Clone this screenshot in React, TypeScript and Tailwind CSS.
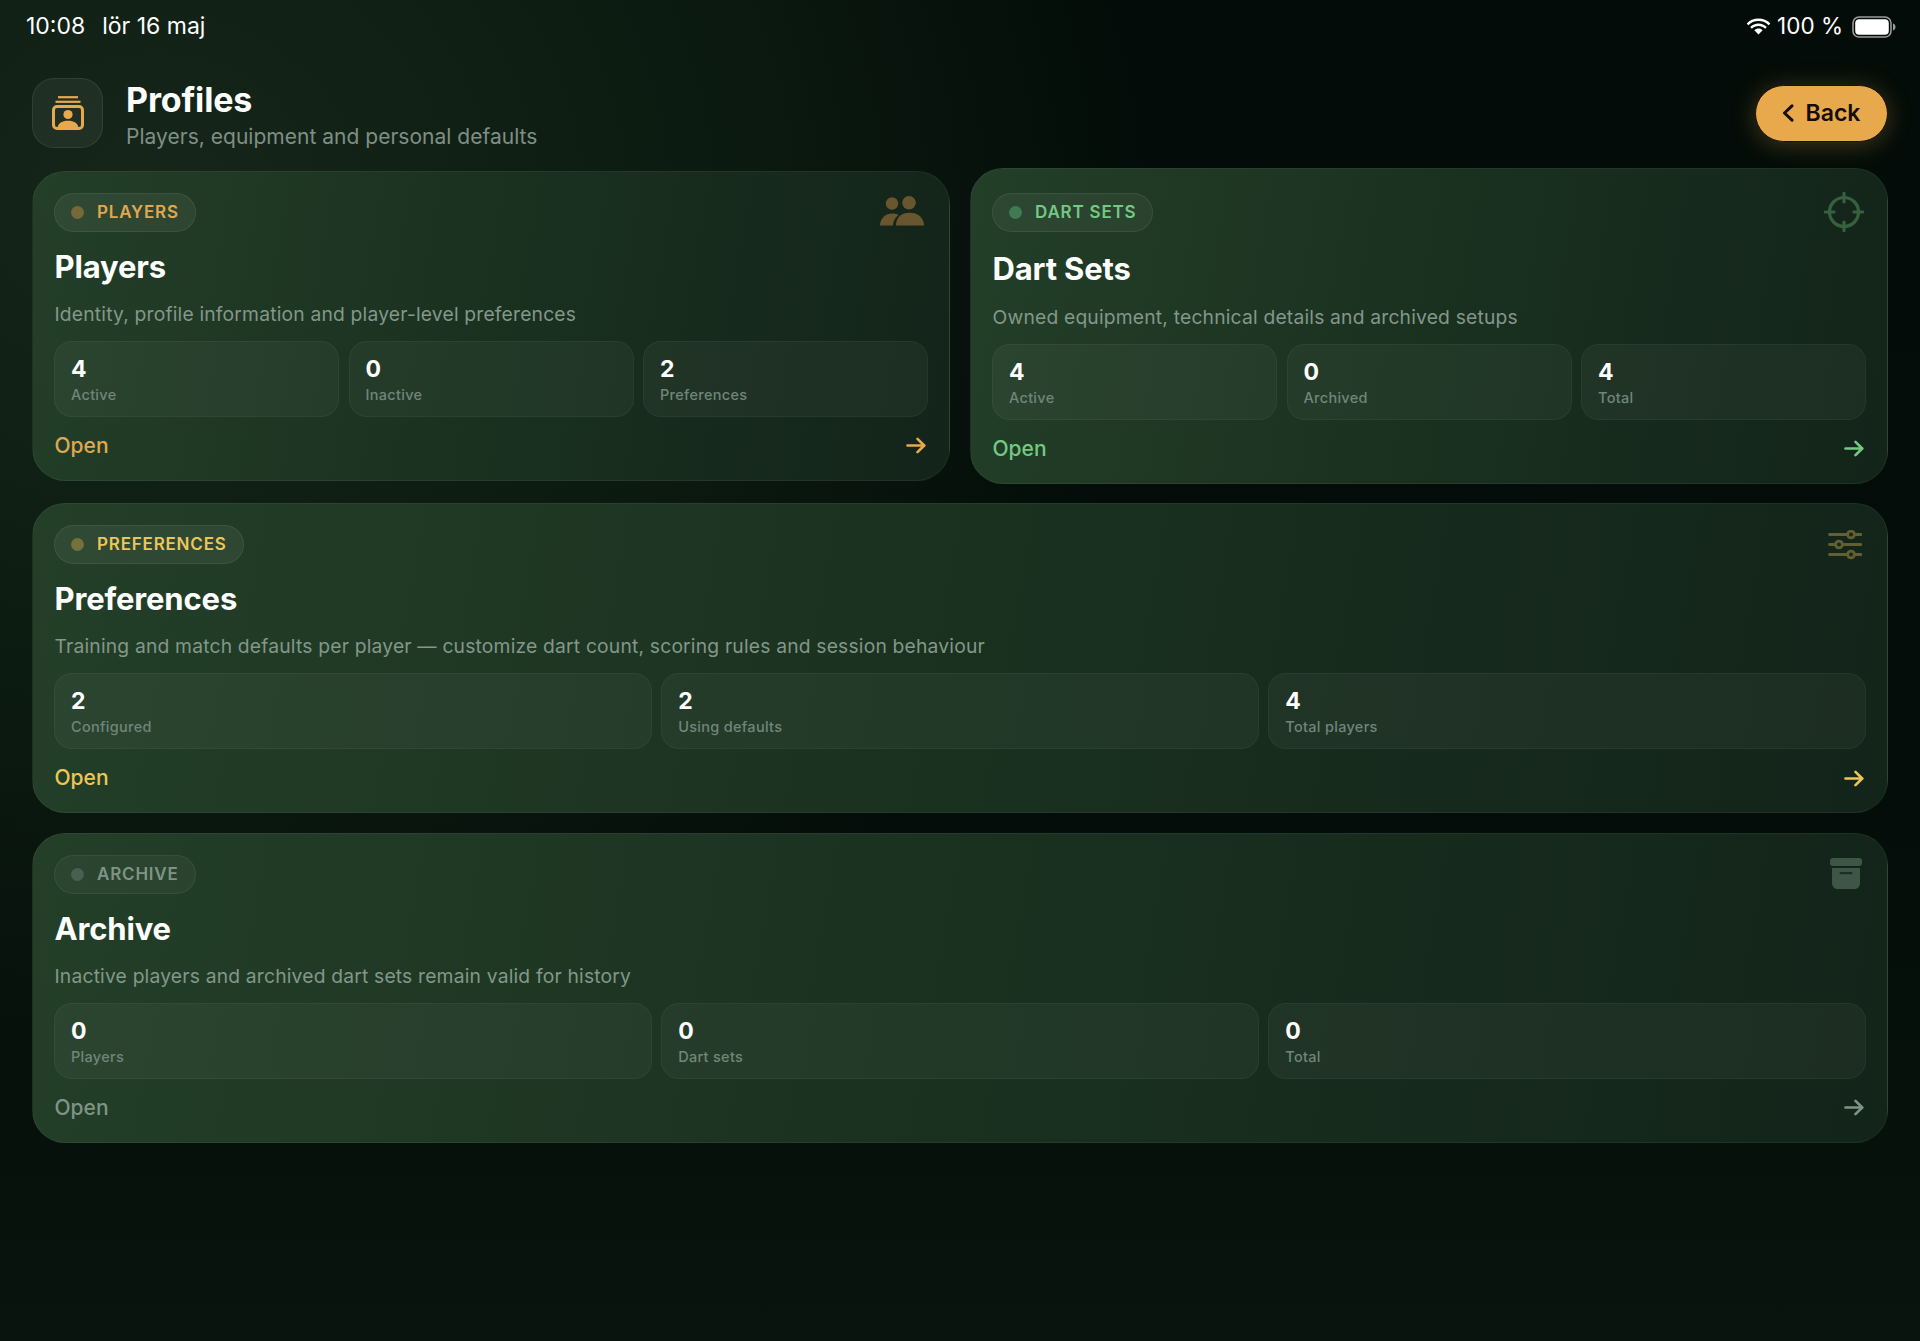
import React from "react";

type Stat = { value: string; label: string };
type CardProps = {
  pill: string;
  title: string;
  desc: string;
  stats: Stat[];
  pillText: string;
  pillBg: string;
  dot: string;
  openText: string;
  icon: React.ReactNode;
  arrow: string;
  lifted?: boolean;
  className?: string;
};

function Card({ pill, title, desc, stats, pillText, pillBg, dot, openText, icon, arrow, lifted, className }: CardProps) {
  return (
    <section
      className={`relative rounded-[33px] border border-[#ffffff0e] bg-[linear-gradient(100deg,#233f28_0%,#1b3220_45%,#13241a_100%)] px-[21px] pb-[20px] ${lifted ? "pt-[24px]" : "pt-[21px]"} ${className ?? ""}`}
    >
      <div className="flex items-start justify-between">
        <div className={`flex h-[39px] items-center gap-[13px] rounded-full border pl-[16px] pr-[16px] ${pillBg}`}>
          <span className={`h-[13px] w-[13px] rounded-full ${dot}`} />
          <span className={`text-[17px] font-semibold leading-none tracking-[0.8px] ${pillText}`}>{pill}</span>
        </div>
        {icon}
      </div>
      <h2 className={`${lifted ? "mt-[18px]" : "mt-[16px]"} pl-[0.5px] text-[31px] font-bold leading-[37px] tracking-[-0.15px] text-white`}>{title}</h2>
      <p className={`${lifted ? "mt-[16.5px]" : "mt-[16px]"} pl-[0.5px] text-[19.3px] leading-[26px] tracking-[0.18px] text-[#83978a]`}>{desc}</p>
      <div className="mt-[14px] grid grid-cols-3 gap-[9.5px]">
        {stats.map((s) => (
          <div key={s.label} className="h-[76px] rounded-[18px] border border-[#ffffff0b] bg-[#ffffff0a] px-[16px] pt-[13px]">
            <div className="text-[23px] font-bold leading-[28px] text-white">{s.value}</div>
            <div className="mt-[3px] text-[14.5px] font-medium leading-[18px] tracking-[0.3px] text-[#71867a]">{s.label}</div>
          </div>
        ))}
      </div>
      <div className="mt-[15px] flex h-[28px] items-center justify-between">
        <span className={`pl-[0.5px] text-[21px] font-medium leading-[28px] ${openText}`}>Open</span>
        <svg width="20" height="17" viewBox="0 0 20 17" fill="none" stroke={arrow} strokeWidth="2.6" strokeLinecap="round" strokeLinejoin="round" className="mr-[2px]">
          <path d="M1.5 8.5H18" />
          <path d="M11.5 1.8L18.2 8.5L11.5 15.2" />
        </svg>
      </div>
    </section>
  );
}

function PeopleIcon() {
  return (
    <svg width="44" height="30" viewBox="0 0 44 30" fill="#6a562e" className="mr-[4px] mt-[3px]">
      <circle cx="12" cy="7.5" r="6.2" />
      <circle cx="29" cy="6.8" r="6.8" />
      <path d="M0 29.5C0.4 22 5.5 17.5 12.5 17.5C15 17.5 16.8 18 18.5 19C15 21.5 13 25.5 13 29.5Z" />
      <path d="M16 29.5C16.2 21.5 21 16.8 29.5 16.8C38 16.8 43.6 21.5 44 29.5Z" />
    </svg>
  );
}

function CrosshairIcon() {
  return (
    <svg width="40" height="40" viewBox="0 0 40 40" fill="none" stroke="#37603f" strokeWidth="3.2" strokeLinecap="round" className="mr-[2px] -mt-[1px]">
      <circle cx="20" cy="20" r="14.5" />
      <path d="M20 1.5V10M20 30V38.5M1.5 20H10M30 20H38.5" />
    </svg>
  );
}

function SlidersIcon() {
  return (
    <svg width="34" height="30" viewBox="0 0 34 30" fill="none" stroke="#625f30" strokeWidth="2.8" strokeLinecap="round" className="mr-[4px] mt-[4.5px]">
      <path d="M1.5 4.5H33M1.5 14.5H33M1.5 24.5H33" />
      <circle cx="23" cy="4.5" r="3.4" fill="#17291c" />
      <circle cx="11" cy="14.5" r="3.4" fill="#17291c" />
      <circle cx="23" cy="24.5" r="3.4" fill="#17291c" />
    </svg>
  );
}

function ArchiveIcon() {
  return (
    <svg width="32" height="31" viewBox="0 0 32 31" fill="#3f5646" className="mr-[4px] mt-[3.5px]">
      <rect x="0" y="0" width="32" height="8" rx="3" />
      <path d="M2 10H30V25C30 28.3 27.8 31 24.5 31H7.5C4.2 31 2 28.3 2 25Z" />
      <rect x="9.5" y="14" width="13" height="2.2" rx="1.1" fill="#1b3020" />
    </svg>
  );
}

const pillAmber = "border-[#ffffff12] bg-[#ffffff0f]";

export default function App() {
  return (
    <div
      className="min-h-[1341px] bg-[radial-gradient(ellipse_1000px_900px_at_8%_15%,#16261a_0%,#0c1b11_55%,transparent_100%),linear-gradient(180deg,#030c08_0%,#040d09_60%,#08140d_100%)] pl-[32px] pr-[32px] pb-[198px]"
      style={{ fontFamily: "Inter, 'Noto Sans', sans-serif" }}
    >
      <div className="-ml-[6px] -mr-[8px] flex h-[52px] items-center justify-between pt-[1px] text-[23px] leading-none text-white">
        <div className="flex gap-[17px]">
          <span>10:08</span>
          <span>lör 16 maj</span>
        </div>
        <div className="flex items-center text-[22.5px]">
          <svg width="25" height="17" viewBox="0 0 24 17" fill="white" className="mr-[6px]">
            <path d="M12 3C16 3 19.6 4.6 22.2 7.2L23.8 5.4C20.8 2.2 16.6 0.4 12 0.4C7.4 0.4 3.2 2.2 0.2 5.4L1.8 7.2C4.4 4.6 8 3 12 3Z" />
            <path d="M12 8C14.6 8 16.9 9 18.6 10.7L20.3 8.9C18.1 6.8 15.2 5.5 12 5.5C8.8 5.5 5.9 6.8 3.7 8.9L5.4 10.7C7.1 9 9.4 8 12 8Z" />
            <path d="M12 10.6C10.4 10.6 9 11.2 7.9 12.3L12 16.6L16.1 12.3C15 11.2 13.6 10.6 12 10.6Z" />
          </svg>
          <span>100 %</span>
          <svg width="44" height="22" viewBox="0 0 44 22" className="ml-[9px]">
            <rect x="1" y="1" width="38" height="20" rx="6" fill="none" stroke="#9a9a9a" strokeWidth="1.6" />
            <rect x="3.2" y="3.2" width="33.6" height="15.6" rx="4" fill="white" />
            <path d="M41 7.5C42.6 8 43.5 9.4 43.5 11C43.5 12.6 42.6 14 41 14.5Z" fill="#9a9a9a" />
          </svg>
        </div>
      </div>

      <header className="mt-[26px] flex h-[70px] items-center justify-between">
        <div className="flex items-center gap-[23px]">
          <div className="flex h-[70px] w-[71px] items-center justify-center rounded-[22px] border border-[#ffffff14] bg-[#ffffff0f]">
            <svg width="32" height="34" viewBox="0 0 32 34" fill="none">
              <rect x="1.5" y="10.5" width="29" height="22" rx="3.5" stroke="#e8a94c" strokeWidth="3" />
              <path d="M6 1.2H26" stroke="#e8a94c" strokeWidth="2.2" />
              <path d="M3.5 5.8H28.5" stroke="#e8a94c" strokeWidth="2.2" />
              <circle cx="16" cy="18.5" r="4.6" fill="#e8a94c" />
              <path d="M5.5 31.5C6.5 27 10 24.8 16 24.8C22 24.8 25.5 27 26.5 31.5Z" fill="#e8a94c" />
            </svg>
          </div>
          <div className="pt-[4px]">
            <h1 className="text-[34px] font-bold leading-[38px] tracking-[-0.15px] text-white">Profiles</h1>
            <p className="mt-[5px] text-[21px] leading-[26px] tracking-[0.02px] text-[#7f8f85]">Players, equipment and personal defaults</p>
          </div>
        </div>
        <button className="flex h-[57px] w-[133px] items-center justify-center gap-[12px] rounded-full border border-[#1a1205] bg-[#e8a94c] pr-[1px] text-[23px] font-semibold text-[#140d03] shadow-[0_3px_24px_rgba(232,169,76,0.28)]">
          <svg width="12" height="18" viewBox="0 0 12 18" fill="none" stroke="#140d03" strokeWidth="3" strokeLinecap="round" strokeLinejoin="round">
            <path d="M10 1.8L2.5 9L10 16.2" />
          </svg>
          Back
        </button>
      </header>

      <main className="mt-[20px] flex flex-col gap-[19.5px]">
        <div className="grid grid-cols-2 items-center gap-[20px]">
          <Card
            pill="PLAYERS"
            title="Players"
            desc="Identity, profile information and player-level preferences"
            pillBg={pillAmber}
            pillText="text-[#e0a850]"
            dot="bg-[#77683a]"
            openText="text-[#e0a850]"
            arrow="#e8a94c"
            icon={<PeopleIcon />}
            stats={[
              { value: "4", label: "Active" },
              { value: "0", label: "Inactive" },
              { value: "2", label: "Preferences" },
            ]}
          />
          <Card
            lifted
            pill="DART SETS"
            title="Dart Sets"
            desc="Owned equipment, technical details and archived setups"
            pillBg="border-[#ffffff12] bg-[#ffffff0c]"
            pillText="text-[#74c983]"
            dot="bg-[#3f7a50]"
            openText="text-[#74c983]"
            arrow="#74c983"
            icon={<CrosshairIcon />}
            stats={[
              { value: "4", label: "Active" },
              { value: "0", label: "Archived" },
              { value: "4", label: "Total" },
            ]}
          />
        </div>
        <Card
          pill="PREFERENCES"
          title="Preferences"
          desc="Training and match defaults per player — customize dart count, scoring rules and session behaviour"
          pillBg="border-[#ffffff12] bg-[#ffffff0f]"
          pillText="text-[#ecc658]"
          dot="bg-[#75713a]"
          openText="text-[#ecc658]"
          arrow="#ecc658"
          icon={<SlidersIcon />}
          stats={[
            { value: "2", label: "Configured" },
            { value: "2", label: "Using defaults" },
            { value: "4", label: "Total players" },
          ]}
        />
        <Card
          pill="ARCHIVE"
          title="Archive"
          desc="Inactive players and archived dart sets remain valid for history"
          pillBg="border-[#ffffff0f] bg-[#ffffff0a]"
          pillText="text-[#7f9486]"
          dot="bg-[#47604f]"
          openText="text-[#7f9486]"
          arrow="#7f9486"
          icon={<ArchiveIcon />}
          stats={[
            { value: "0", label: "Players" },
            { value: "0", label: "Dart sets" },
            { value: "0", label: "Total" },
          ]}
        />
      </main>
    </div>
  );
}
